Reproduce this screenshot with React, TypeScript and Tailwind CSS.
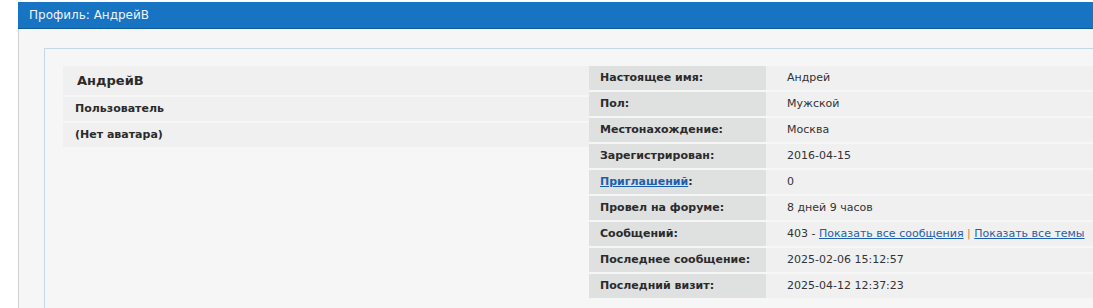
const rows: { label: React.ReactNode; value: React.ReactNode }[] = [
  { label: "Настоящее имя:", value: "Андрей" },
  { label: "Пол:", value: "Мужской" },
  { label: "Местонахождение:", value: "Москва" },
  { label: "Зарегистрирован:", value: "2016-04-15" },
  {
    label: (
      <>
        <a href="#" className="text-[#1d5fac] underline">
          Приглашений
        </a>
        :
      </>
    ),
    value: "0",
  },
  { label: "Провел на форуме:", value: "8 дней 9 часов" },
  {
    label: "Сообщений:",
    value: (
      <>
        403 -{" "}
        <a href="#" className="text-[#1d5fac] underline">
          Показать все сообщения
        </a>{" "}
        <span className="text-[#c4893f]">|</span>{" "}
        <a href="#" className="text-[#1d5fac] underline">
          Показать все темы
        </a>
      </>
    ),
  },
  { label: "Последнее сообщение:", value: "2025-02-06 15:12:57" },
  { label: "Последний визит:", value: "2025-04-12 12:37:23" },
];

export default function App() {
  return (
    <div className="w-[1093px] h-[308px] overflow-hidden bg-white pt-[2px] pl-[18px] font-['DejaVu_Sans',sans-serif]">
      <div className="w-[1200px] h-[27px] bg-[#1674c3] border-b border-[#0f5a99] pl-[11px] flex items-center text-[12px] text-[#eef3fa]">
        Профиль: АндрейВ
      </div>

      <div className="w-[1200px] h-[400px] bg-[#f6f6f6] border-l border-[#cfcfcf] pl-[25px] pt-[19px]">
        <div className="w-[1200px] h-[400px] border-l border-t border-[#c6d7e8] pl-[18px] pt-[17px]">
          <div className="flex items-start">
            {/* левая колонка — ник, статус, аватар */}
            <div className="w-[526px] flex flex-col gap-[2px] text-[#2b2b2b] font-bold">
              <div className="h-[29px] bg-[#f0f0f0] pl-[14px] flex items-center text-[13px]">
                АндрейВ
              </div>
              <div className="h-[24px] bg-[#f0f0f0] pl-[12px] flex items-center text-[11px]">
                Пользователь
              </div>
              <div className="h-[24px] bg-[#f0f0f0] pl-[12px] flex items-center text-[11px]">
                (Нет аватара)
              </div>
            </div>

            {/* правая колонка — данные профиля */}
            <div className="w-[600px] grid grid-cols-[177px_1fr] gap-y-[2px] text-[11px]">
              {rows.map((row, i) => (
                <div key={i} className="contents">
                  <div className="h-[24px] bg-[#dfe0e0] pl-[11px] flex items-center font-bold text-[#2b2b2b]">
                    <span>{row.label}</span>
                  </div>
                  <div className="h-[24px] bg-[#f0f0f0] pl-[21px] flex items-center text-[#333]">
                    <span>{row.value}</span>
                  </div>
                </div>
              ))}
            </div>
          </div>
        </div>
      </div>
    </div>
  );
}
